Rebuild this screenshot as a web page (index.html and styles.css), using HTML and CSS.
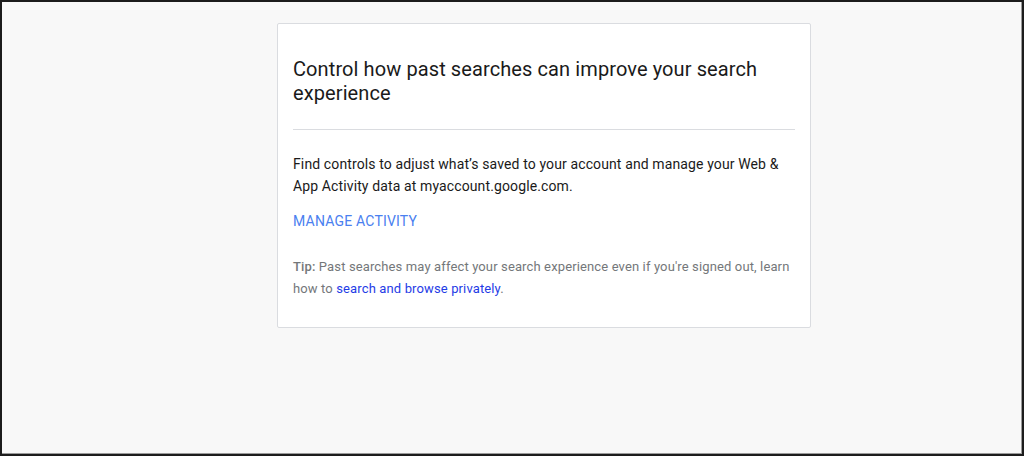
FILE: index.html
```html
<!DOCTYPE html>
<html>
<head>
<meta charset="utf-8">
<link rel="stylesheet" href="styles.css">
</head>
<body>
<div class="frame">
  <div class="card">
    <h1 class="title">Control how past searches can improve your search experience</h1>
    <hr class="divider">
    <p class="desc">Find controls to adjust what’s saved to your account and manage your Web &amp; App Activity data at myaccount.google.com.</p>
    <a class="manage" href="#">MANAGE ACTIVITY</a>
    <p class="tip"><b>Tip:</b> Past searches may affect your search experience even if you're signed out, learn how to <a class="tiplink" href="#">search and browse privately</a>.</p>
  </div>
</div>
</body>
</html>
```

FILE: styles.css
```css
html, body {
  margin: 0;
  padding: 0;
}
body {
  font-family: Roboto, "Liberation Sans", Arial, sans-serif;
}
.frame {
  box-sizing: border-box;
  width: 1024px;
  height: 456px;
  background: #f8f8f8;
  border: 2px solid #1c1c1c;
  box-shadow: inset -1px -1px 0 #9a9a9a;
  padding: 21px 0 0 275px;
}
.card {
  box-sizing: border-box;
  width: 534px;
  background: #fff;
  border: 1px solid #dadce0;
  border-radius: 2px;
  padding: 33px 15px 27px 15px;
}
.title {
  margin: 0;
  font-size: 20px;
  line-height: 24px;
  font-weight: 400;
  letter-spacing: 0.1px;
  color: #1a1a1a;
}
.divider {
  border: 0;
  border-top: 1px solid #dadce0;
  margin: 24px 0 23px 0;
}
.desc {
  margin: 0;
  font-size: 14px;
  line-height: 22px;
  letter-spacing: 0.12px;
  color: #1a1a1a;
}
.manage {
  display: block;
  margin-top: 13px;
  font-size: 14px;
  line-height: 22px;
  letter-spacing: 0.2px;
  color: #4a80f0;
  text-decoration: none;
}
.tip {
  margin: 24px 0 0 0;
  font-size: 13px;
  line-height: 22px;
  letter-spacing: 0.13px;
  color: #74777a;
}
.tip b {
  font-weight: 500;
}
.tiplink {
  color: #1f3ce6;
  text-decoration: none;
}
```
